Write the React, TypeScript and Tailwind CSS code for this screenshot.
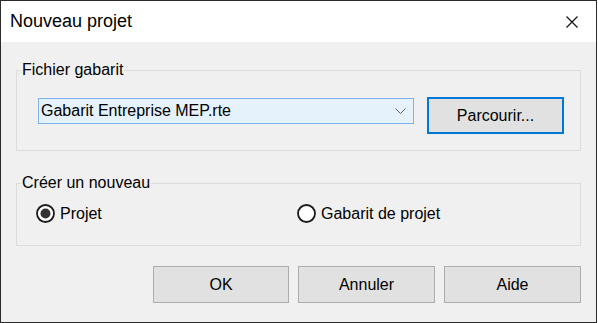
import React from "react";

function Radio({ checked }: { checked: boolean }) {
  return (
    <svg width="19" height="19" viewBox="0 0 19 19" className="shrink-0">
      <circle cx="9.5" cy="9.5" r="8.5" fill="#ffffff" stroke="#1a1a1a" strokeWidth="1.8" />
      {checked && <circle cx="9.5" cy="9.5" r="5" fill="#333333" />}
    </svg>
  );
}

function Group({ label, className, children }: { label: string; className: string; children: React.ReactNode }) {
  return (
    <div className={`relative mx-[15px] border border-[#dcdcdc] ${className}`}>
      <span className="absolute left-[4px] top-[-11px] bg-[#f0f0f0] px-[1px] text-[16px] leading-[20px] text-black">
        {label}
      </span>
      {children}
    </div>
  );
}

function Button({ children, focused = false, className = "" }: { children: React.ReactNode; focused?: boolean; className?: string }) {
  return (
    <button
      className={`h-[37px] bg-[#e1e1e1] text-[16px] text-black ${
        focused ? "border-2 border-[#0078d7]" : "border border-[#adadad]"
      } ${className}`}
    >
      {children}
    </button>
  );
}

export default function App() {
  return (
    <div
      className="flex h-[323px] w-[597px] flex-col border border-[#2b2b2b] bg-[#f0f0f0]"
      style={{ fontFamily: '"Liberation Sans", Arial, sans-serif' }}
    >
      <div className="flex h-[41px] shrink-0 items-center justify-between bg-white pl-[9px] pr-[18px]">
        <span className="text-[18px] text-black">Nouveau projet</span>
        <svg width="12" height="12" viewBox="0 0 12 12">
          <path d="M0.5 0.5 L11.5 11.5 M11.5 0.5 L0.5 11.5" stroke="#111111" strokeWidth="1.2" />
        </svg>
      </div>

      <Group label="Fichier gabarit" className="mt-[28px] h-[81px]">
        <div className="flex items-start pl-[21px]">
          <div className="mt-[27px] flex h-[26px] w-[376px] items-center justify-between border border-[#7eb4ea] bg-[#e5f1fb] pl-[2px] pr-[7px]">
            <span className="text-[16px] text-black">Gabarit Entreprise MEP.rte</span>
            <svg width="11" height="6" viewBox="0 0 11 6">
              <path d="M0.5 0.5 L5.5 5.5 L10.5 0.5" fill="none" stroke="#606060" strokeWidth="1" />
            </svg>
          </div>
          <Button focused className="ml-[13px] mt-[26px] w-[137px]">
            Parcourir...
          </Button>
        </div>
      </Group>

      <Group label="Créer un nouveau" className="mt-[32px] h-[63px]">
        <div className="flex h-full items-center pb-[2px] pl-[19px]">
          <div className="flex w-[261px] items-center gap-[5px]">
            <Radio checked />
            <span className="text-[16px] text-black">Projet</span>
          </div>
          <div className="flex items-center gap-[5px]">
            <Radio checked={false} />
            <span className="text-[16px] text-black">Gabarit de projet</span>
          </div>
        </div>
      </Group>

      <div className="mt-[20px] flex justify-end gap-[9px] pr-[15px]">
        <Button className="w-[136px]">OK</Button>
        <Button className="w-[137px]">Annuler</Button>
        <Button className="w-[137px]">Aide</Button>
      </div>
    </div>
  );
}
